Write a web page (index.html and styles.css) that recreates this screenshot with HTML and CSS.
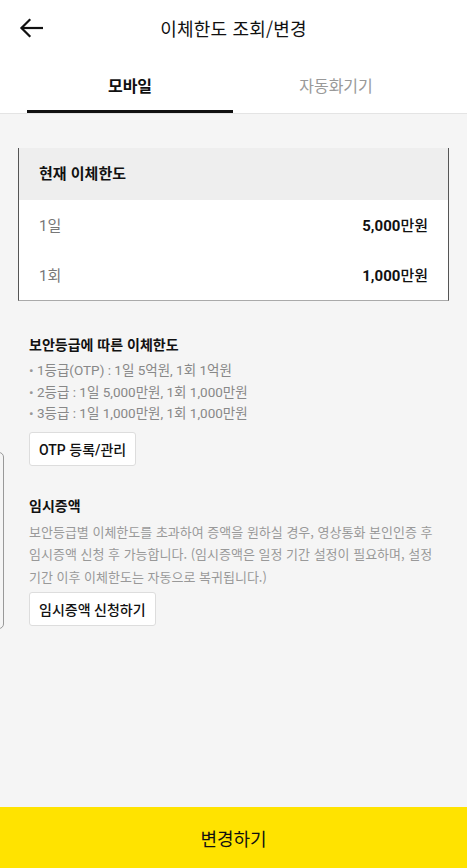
FILE: index.html
```html
<!doctype html>
<html lang="ko">
  <head>
    <meta charset="UTF-8" />
    <meta name="viewport" content="width=device-width, initial-scale=1.0" />
    <title>이체한도 조회/변경</title>
    <link rel="stylesheet" href="styles.css">
  </head>
  <body>
    <div class="page">
      <header class="topbar">
        <button class="back" aria-label="뒤로">
          <svg width="24" height="20" viewBox="0 0 24 20" fill="none" stroke="#111" stroke-width="2.2" stroke-linecap="square">
            <path d="M23 10H3" />
            <path d="M10.5 2 2.5 10l8 8" />
          </svg>
        </button>
        <h1>이체한도 조회/변경</h1>
      </header>

      <nav class="tabs">
        <div class="tab active">모바일</div>
        <div class="tab">자동화기기</div>
      </nav>

      <main class="content">
        <div class="side-edge"></div>

        <div class="limit-card">
          <div class="limit-head">현재 이체한도</div>
          <div class="limit-row">
            <span class="label">1일</span>
            <span class="value"><b>5,000</b>만원</span>
          </div>
          <div class="limit-row">
            <span class="label">1회</span>
            <span class="value"><b>1,000</b>만원</span>
          </div>
        </div>

        <section class="info">
          <h2>보안등급에 따른 이체한도</h2>
          <ul>
            <li>1등급(OTP) : 1일 5억원, 1회 1억원</li>
            <li>2등급 : 1일 5,000만원, 1회 1,000만원</li>
            <li>3등급 : 1일 1,000만원, 1회 1,000만원</li>
          </ul>
          <button class="sub-btn">OTP 등록/관리</button>
        </section>

        <section class="info temp">
          <h2>임시증액</h2>
          <p>보안등급별 이체한도를 초과하여 증액을 원하실 경우, 영상통화 본인인증 후 임시증액 신청 후 가능합니다. (임시증액은 일정 기간 설정이 필요하며, 설정 기간 이후 이체한도는 자동으로 복귀됩니다.)</p>
          <button class="sub-btn">임시증액 신청하기</button>
        </section>
      </main>

      <button class="submit">변경하기</button>
    </div>
  </body>
</html>
```

FILE: styles.css
```css
* {
  box-sizing: border-box;
}
html,
body {
  margin: 0;
  height: 100%;
}
body {
  font-family: Roboto, "Noto Sans CJK KR", sans-serif;
  color: #111;
  background: #f5f5f5;
}
.page {
  display: flex;
  flex-direction: column;
  height: 868px;
}
.topbar {
  position: relative;
  height: 56px;
  display: flex;
  align-items: center;
  justify-content: center;
  background: #fff;
}
.topbar h1 {
  margin: 0;
  font-size: 18px;
  font-weight: 400;
  font-family: "Noto Sans CJK KR", sans-serif;
  letter-spacing: 0.2px;
}
.back {
  position: absolute;
  left: 19px;
  top: 18px;
  padding: 0;
  border: none;
  background: none;
  line-height: 0;
}
.tabs {
  display: flex;
  padding: 0 0 0 27px;
  height: 58px;
  background: #fff;
  border-bottom: 1px solid #e4e4e4;
}
.tab {
  width: 206px;
  display: flex;
  align-items: center;
  justify-content: center;
  padding-top: 4px;
  font-family: "Noto Sans CJK KR", sans-serif;
  font-size: 16px;
  color: #999;
  border-bottom: 3px solid transparent;
}
.tab.active {
  color: #111;
  font-weight: 700;
  border-bottom-color: #111;
}
.content {
  position: relative;
  flex: 1;
  padding: 34px 18px 0 18px;
}
.side-edge {
  position: absolute;
  left: -6px;
  top: 338px;
  width: 10px;
  height: 177px;
  border: 1px solid #999;
  border-radius: 5px;
}
.limit-card {
  background: #fff;
  border-left: 1px solid #555;
  border-right: 1px solid #555;
  border-bottom: 1px solid #aaa;
}
.limit-head {
  height: 52px;
  display: flex;
  align-items: center;
  padding: 0 20px 4px;
  background: #eeeeee;
  font-family: "Noto Sans CJK KR", sans-serif;
  font-size: 15px;
  font-weight: 700;
}
.limit-row {
  height: 50px;
  display: flex;
  align-items: center;
  justify-content: space-between;
  padding: 0 20px 2px;
  font-size: 15px;
}
.limit-row .label {
  color: #777;
}
.limit-row .value {
  font-weight: 500;
}
.limit-row .value b {
  font-weight: 700;
}
.info {
  padding: 33px 11px 0 11px;
}
.info h2 {
  margin: 0 0 6px;
  font-family: "Noto Sans CJK KR", sans-serif;
  font-size: 14px;
  font-weight: 700;
  line-height: 20px;
}
.info ul {
  margin: 0;
  padding: 0;
  list-style: none;
}
.info li {
  font-size: 13.5px;
  line-height: 21.5px;
  color: #888;
}
.info li::before {
  content: "• ";
  color: #999;
}
.info p {
  margin: 0;
  font-family: "Noto Sans CJK KR", sans-serif;
  font-size: 13px;
  line-height: 22.5px;
  color: #999;
}
.sub-btn {
  margin-top: 7px;
  height: 34px;
  padding: 0 9px;
  background: #fff;
  border: 1px solid #ddd;
  border-radius: 3px;
  font-family: Roboto, "Noto Sans CJK KR", sans-serif;
  font-size: 14px;
  font-weight: 500;
  color: #111;
}
.temp {
  padding-top: 29px;
}
.temp .sub-btn {
  margin-top: 4px;
}
.submit {
  height: 61px;
  border: none;
  background: #ffe300;
  font-family: "Noto Sans CJK KR", sans-serif;
  font-size: 18px;
  color: #111;
}
```
